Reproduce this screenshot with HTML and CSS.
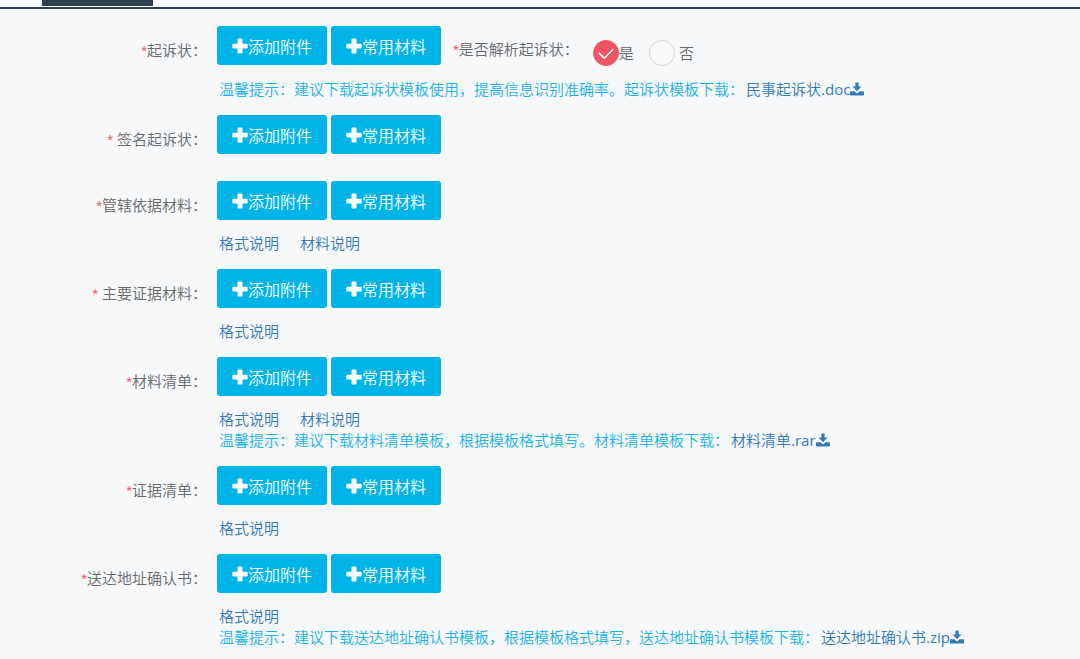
FILE: index.html
```
<!DOCTYPE html>
<html lang="zh-CN">
<head>
  <meta charset="UTF-8">
  <title>上传材料</title>
  <link rel="stylesheet" href="styles.css">
</head>
<body>

<svg class="sprite" aria-hidden="true">
  <symbol id="plus" viewBox="0 0 16 16">
    <path d="M6.4 0.5h3.2q0.9 0 0.9 0.9v4.3h4.2q1 0 1 1v2.8q0 1-1 1h-4.2v4.2q0 0.9-0.9 0.9h-3.2q-0.9 0-0.9-0.9v-4.2h-4.2q-1 0-1-1v-2.8q0-1 1-1h4.2v-4.3q0-0.9 0.9-0.9z"/>
  </symbol>
  <symbol id="download" viewBox="0 0 14 14">
    <path d="M5.4 0.5h3.2v4h2.9L7 9.2 2.500 4.500h2.900zM0.800 9.200h3.600L7 11.500l2.600-2.300h3.600q0.800 0 0.800 0.800v2.700q0 0.800-0.800 0.800H0.800q-0.800 0-0.800-0.800V10q0-0.800 0.800-0.800z"/>
  </symbol>
</svg>

<nav class="tabs">
  <div class="tab active"></div>
</nav>

<form class="form">
  <div class="row">
    <div class="label"><i>*</i>起诉状：</div>
    <div class="field">
      <div class="buttons">
        <button type="button"><svg><use href="#plus"/></svg>添加附件</button>
        <button type="button"><svg><use href="#plus"/></svg>常用材料</button>
        <span class="question"><i>*</i>是否解析起诉状：</span>
        <span class="choices">
          <label><input type="radio" name="parse" checked>是</label>
          <label class="spaced"><input type="radio" name="parse">否</label>
        </span>
      </div>
      <p class="hint">温馨提示：建议下载起诉状模板使用，提高信息识别准确率。起诉状模板下载：<a href="#">民事起诉状<span class="ext">.doc</span><svg><use href="#download"/></svg></a></p>
    </div>
  </div>

  <div class="row">
    <div class="label"><i>*</i> 签名起诉状：</div>
    <div class="field">
      <div class="buttons">
        <button type="button"><svg><use href="#plus"/></svg>添加附件</button>
        <button type="button"><svg><use href="#plus"/></svg>常用材料</button>
      </div>
    </div>
  </div>

  <div class="row">
    <div class="label"><i>*</i>管辖依据材料：</div>
    <div class="field">
      <div class="buttons">
        <button type="button"><svg><use href="#plus"/></svg>添加附件</button>
        <button type="button"><svg><use href="#plus"/></svg>常用材料</button>
      </div>
      <p class="links"><a href="#">格式说明</a><a href="#">材料说明</a></p>
    </div>
  </div>

  <div class="row">
    <div class="label"><i>*</i> 主要证据材料：</div>
    <div class="field">
      <div class="buttons">
        <button type="button"><svg><use href="#plus"/></svg>添加附件</button>
        <button type="button"><svg><use href="#plus"/></svg>常用材料</button>
      </div>
      <p class="links"><a href="#">格式说明</a></p>
    </div>
  </div>

  <div class="row">
    <div class="label"><i>*</i>材料清单：</div>
    <div class="field">
      <div class="buttons">
        <button type="button"><svg><use href="#plus"/></svg>添加附件</button>
        <button type="button"><svg><use href="#plus"/></svg>常用材料</button>
      </div>
      <p class="links"><a href="#">格式说明</a><a href="#">材料说明</a></p>
      <p class="hint">温馨提示：建议下载材料清单模板，根据模板格式填写。材料清单模板下载：<a href="#">材料清单<span class="ext">.rar</span><svg><use href="#download"/></svg></a></p>
    </div>
  </div>

  <div class="row">
    <div class="label"><i>*</i>证据清单：</div>
    <div class="field">
      <div class="buttons">
        <button type="button"><svg><use href="#plus"/></svg>添加附件</button>
        <button type="button"><svg><use href="#plus"/></svg>常用材料</button>
      </div>
      <p class="links"><a href="#">格式说明</a></p>
    </div>
  </div>

  <div class="row">
    <div class="label"><i>*</i>送达地址确认书：</div>
    <div class="field">
      <div class="buttons">
        <button type="button"><svg><use href="#plus"/></svg>添加附件</button>
        <button type="button"><svg><use href="#plus"/></svg>常用材料</button>
      </div>
      <p class="links"><a href="#">格式说明</a></p>
      <p class="hint">温馨提示：建议下载送达地址确认书模板，根据模板格式填写，送达地址确认书模板下载：<a href="#">送达地址确认书<span class="ext">.zip</span><svg><use href="#download"/></svg></a></p>
    </div>
  </div>
</form>

</body>
</html>
```
FILE: styles.css
```
* {
  box-sizing: border-box;
}

body {
  margin: 0;
  background-color: #f7f8fa;
  color: #676a6c;
  font-family: "Open Sans", "Noto Sans CJK SC", sans-serif;
  font-size: 15px;
  font-weight: 350;
  line-height: 22px;
}

.sprite {
  display: none;
}

.tabs {
  display: flex;
  height: 9px;
  padding-left: 42px;
  background-color: #fafafa;
  border-bottom: 2px solid #2f4050;
}

.tab {
  width: 111px;
  height: 6px;
}

.tab.active {
  background-color: #2f4050;
}

.form {
  padding-top: 17px;
}

.row {
  display: flex;
  gap: 10px;
  margin-bottom: 15px;
}

.label {
  width: 207px;
  padding-top: 13px;
  text-align: right;
  white-space: nowrap;
}

i {
  color: #ed5565;
  font-family: "Liberation Sans", sans-serif;
  font-style: normal;
}

.field {
  flex: 1;
}

.buttons {
  display: flex;
  gap: 4px;
  margin-bottom: 12px;
}

button {
  display: flex;
  align-items: center;
  justify-content: center;
  width: 110px;
  height: 39px;
  padding: 0;
  border: none;
  border-radius: 3px;
  background-color: #00b4e8;
  color: white;
  font-family: inherit;
  font-size: 16px;
  font-weight: 350;
  cursor: pointer;
}

button svg {
  width: 16px;
  height: 16px;
  fill: white;
}

.question {
  padding: 12px 0 0 8px;
}

.choices {
  display: flex;
  gap: 15px;
  padding: 14px 0 0 10px;
}

.choices label {
  display: flex;
  align-items: center;
  height: 26px;
}

.choices .spaced {
  gap: 4px;
}

input[type="radio"] {
  appearance: none;
  width: 26px;
  height: 26px;
  margin: 0;
  border: 1px solid #d8d8d4;
  border-radius: 50%;
  background-color: #fafafa;
}

input[type="radio"]:checked {
  display: grid;
  place-items: center;
  border-color: #ed5565;
  background-color: #ed5565;
}

/* tick inside the selected radio */
input[type="radio"]:checked::after {
  content: "";
  width: 12px;
  height: 7px;
  margin-bottom: 4px;
  border-left: 2px solid white;
  border-bottom: 2px solid white;
  border-radius: 1px;
  transform: rotate(-45deg);
}

.hint,
.links {
  margin: 0;
  padding-left: 2px;
}

.hint {
  color: #1ab2e8;
}

.links + .hint {
  margin-top: -1px;
}

.links {
  display: flex;
  gap: 21px;
}

a {
  color: #337ab7;
  text-decoration: none;
}

.hint a {
  margin-left: 2px;
}

.ext {
  font-weight: 400;
}

.hint svg {
  width: 14px;
  height: 14px;
  fill: #337ab7;
  vertical-align: -1px;
}
```
